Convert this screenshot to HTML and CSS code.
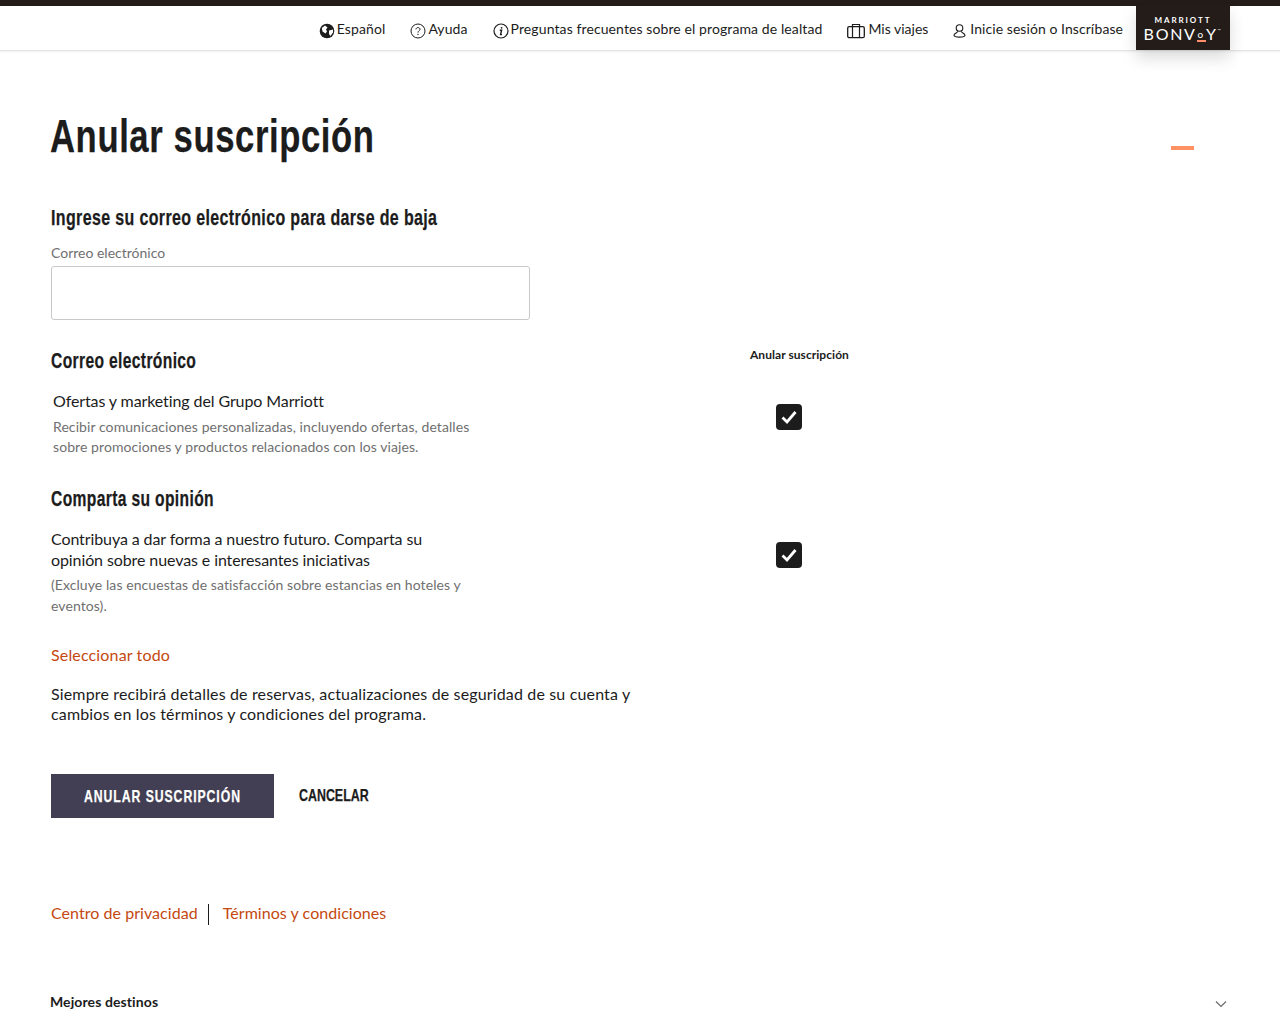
FILE: index.html
```html
<!DOCTYPE html>
<html lang="es">
<head>
<meta charset="utf-8">
<title>Anular suscripción</title>
<link rel="stylesheet" href="styles.css">
</head>
<body>
<header class="topbar">
  <nav class="nav">
    <a class="nav-item"><svg class="ico" width="16" height="16" viewBox="0 0 16 16"><circle cx="8" cy="8" r="7.300" fill="#1c1c1c"/><path d="M2.800 5 6 2.500 8.500 4.500 7 6.500 8 8.500 6.500 10.500 3.500 8.500ZM10 7.500 14 6.500 14 9.500 11.500 13 10 11Z" fill="#fff"/></svg>Español</a>
    <a class="nav-item"><svg class="ico" width="16" height="16" viewBox="0 0 16 16"><circle cx="8" cy="8" r="7" fill="none" stroke="#1c1c1c"/><path d="M6 6.300C6 4 10 4 10 6.300 10 7.800 8 7.800 8 9.600" fill="none" stroke="#1c1c1c"/><circle cx="8" cy="11.400" r=".7" fill="#1c1c1c"/></svg>Ayuda</a>
    <a class="nav-item"><svg class="ico" width="16" height="16" viewBox="0 0 16 16"><circle cx="8" cy="8" r="7" fill="none" stroke="#1c1c1c" stroke-width="1.200"/><path d="M6.800 7.200H8.600L7.600 11.600H9" fill="none" stroke="#1c1c1c" stroke-width="1.400"/><circle cx="8.600" cy="4.800" r=".9" fill="#1c1c1c"/></svg>Preguntas frecuentes sobre el programa de lealtad</a>
    <a class="nav-item nav-trips"><svg class="ico" width="18" height="16" viewBox="0 0 18 16"><rect x=".7" y="3.700" width="16.600" height="11" rx="1.500" fill="none" stroke="#1c1c1c" stroke-width="1.300"/><path d="M5.500 14.500V1.500H12.500V14.500" fill="none" stroke="#1c1c1c" stroke-width="1.200"/></svg>Mis viajes</a>
    <a class="nav-item nav-user"><svg class="ico" width="13" height="16" viewBox="0 0 13 16"><circle cx="6.500" cy="5" r="3.300" fill="none" stroke="#1c1c1c" stroke-width="1.100"/><path d="M4.800 8.300C4.800 10 1 10 1 12.300 1 14.700 12 14.700 12 12.300 12 10 8.200 10 8.200 8.300" fill="none" stroke="#1c1c1c" stroke-width="1.100"/></svg>Inicie sesión o Inscríbase</a>
    <div class="logo">
      <span class="logo-top">MARRIOTT</span>
      <span class="logo-main">BONV<span class="logo-o">o</span>Y<span class="logo-tm">™</span></span>
    </div>
  </nav>
</header>

<main class="main">
  <div class="title-row">
    <h1 class="title">Anular suscripción</h1>
    <span class="dash"></span>
  </div>

  <h2 class="h2 h2-email">Ingrese su correo electrónico para darse de baja</h2>
  <label class="field-label" for="email">Correo electrónico</label>
  <input class="field" id="email" type="text">

  <section class="pref pref-first">
    <div class="pref-head">
      <h2 class="h2 h2-tight">Correo electrónico</h2>
      <span class="col-label">Anular suscripción</span>
    </div>
    <div class="pref-row">
      <div class="pref-text indented">
        <p class="pref-title">Ofertas y marketing del Grupo Marriott</p>
        <p class="pref-desc">Recibir comunicaciones personalizadas, incluyendo ofertas, detalles sobre promociones y productos relacionados con los viajes.</p>
      </div>
      <span class="check"><svg width="26" height="26" viewBox="0 0 26 26"><path d="M6.500 13.500 11 18 19.500 8" fill="none" stroke="#fff" stroke-width="2.800"/></svg></span>
    </div>
  </section>

  <section class="pref pref-second">
    <h2 class="h2 h2-tight">Comparta su opinión</h2>
    <div class="pref-row">
      <div class="pref-text">
        <p class="pref-title">Contribuya a dar forma a nuestro futuro. Comparta su opinión sobre nuevas e interesantes iniciativas</p>
        <p class="pref-desc">(Excluye las encuestas de satisfacción sobre estancias en hoteles y eventos).</p>
      </div>
      <span class="check"><svg width="26" height="26" viewBox="0 0 26 26"><path d="M6.500 13.500 11 18 19.500 8" fill="none" stroke="#fff" stroke-width="2.800"/></svg></span>
    </div>
  </section>

  <a class="link select-all">Seleccionar todo</a>
  <p class="note">Siempre recibirá detalles de reservas, actualizaciones de seguridad de su cuenta y cambios en los términos y condiciones del programa.</p>

  <div class="actions">
    <button class="btn-primary" type="button"><span class="btn-label">ANULAR SUSCRIPCIÓN</span></button>
    <a class="btn-cancel">CANCELAR</a>
  </div>

  <div class="legal">
    <a class="link legal-a">Centro de privacidad</a>
    <a class="link legal-b">Términos y condiciones</a>
  </div>

  <div class="footer-row">
    <span class="footer-title">Mejores destinos</span>
    <svg class="chev" width="12" height="8" viewBox="0 0 12 8"><path d="M1 1.500 6 6.500 11 1.500" fill="none" stroke="#6b6b6b" stroke-width="1.200"/></svg>
  </div>
</main>
</body>
</html>
```
FILE: styles.css
```css
* { box-sizing: border-box; }
html, body { margin: 0; padding: 0; }
body {
  background: #fff;
  color: #1c1c1c;
  font-family: Lato, "Liberation Sans", sans-serif;
  height: 1024px;
  overflow: hidden;
}
p, h1, h2 { margin: 0; }

.topbar {
  height: 51px;
  border-top: 6px solid #231c19;
  border-bottom: 1px solid #e4e4e4;
  box-shadow: 0 1px 2px rgba(0,0,0,.06);
  background: #fff;
}
.nav {
  display: flex;
  justify-content: flex-end;
  padding-right: 50px;
  height: 44px;
}
.nav-item {
  display: flex;
  align-items: center;
  gap: 2px;
  margin-right: 25px;
  font-size: 14px;
  letter-spacing: .1px;
  color: #1c1c1c;
  white-space: nowrap;
}
.nav-trips { gap: 3px; letter-spacing: 0; }
.nav-user { gap: 4px; margin-right: 13px; letter-spacing: .06px; }
.ico { margin-top: 5px; flex: none; }
.logo {
  width: 94px;
  height: 44px;
  background: #231c19;
  color: #fff;
  display: flex;
  flex-direction: column;
  align-items: center;
  padding-top: 9px;
  box-shadow: 0 8px 16px rgba(0,0,0,.14);
}
.logo-top {
  font-size: 8px;
  line-height: 10px;
  letter-spacing: 1.900px;
  font-weight: 700;
}
.logo-main {
  height: 17px;
  margin-top: -3px;
  font-size: 16px;
  line-height: 17px;
  letter-spacing: 1.700px;
  white-space: nowrap;
}
.logo-o {
  display: inline-block;
  font-size: 10px;
  line-height: 9px;
  vertical-align: 2px;
  padding: 0 1px 1px;
  border-bottom: 2px solid #ff8d6b;
  margin-bottom: -3px;
}
.logo-tm { font-size: 4px; vertical-align: 8px; }

.main { padding: 0 50px 0 51px; }
.title-row {
  display: flex;
  justify-content: space-between;
  align-items: flex-start;
  padding-top: 57px;
  padding-right: 35px;
}
.title, .h2, .btn-label, .btn-cancel {
  font-family: "Liberation Sans", sans-serif;
  font-weight: 700;
  transform-origin: left center;
  white-space: nowrap;
  -webkit-text-stroke: .25px currentColor;
}
.title {
  font-size: 46px;
  line-height: 56px;
  margin-left: -1px;
  width: 323px;
  letter-spacing: .8px;
  transform: scaleX(.753);
}
.dash {
  width: 23px;
  height: 4px;
  background: #ff9162;
  margin-top: 38px;
  margin-right: 1px;
}
.h2 {
  font-size: 22px;
  line-height: 26px;
  letter-spacing: .5px;
  transform: scaleX(.727);
}
.h2-tight { transform: scaleX(.71); }
.h2-email { margin-top: 41px; }
.field-label {
  display: block;
  margin-top: 13px;
  font-size: 14px;
  line-height: 18px;
  color: #707070;
}
.field {
  display: block;
  width: 479px;
  height: 54px;
  margin-top: 4px;
  border: 1px solid #c9c9c9;
  border-radius: 3px;
  background: #fff;
}
.pref-first { margin-top: 28px; }
.pref-head {
  display: flex;
  align-items: flex-start;
}
.pref-head .h2 { width: 699px; flex: none; }
.col-label {
  font-size: 12px;
  line-height: 16px;
  letter-spacing: .05px;
  font-weight: 700;
  margin-top: -1px;
}
.pref-row {
  display: flex;
  align-items: flex-start;
  margin-top: 16px;
}
.pref-text { width: 725px; flex: none; }
.indented { padding-left: 2px; }
.pref-title {
  width: 420px;
  font-size: 16px;
  line-height: 21px;
  letter-spacing: -.1px;
}
.pref-desc {
  width: 420px;
  margin-top: 6px;
  font-size: 14px;
  line-height: 20px;
  letter-spacing: .08px;
  color: #707070;
}
.pref-second .pref-desc {
  margin-top: 4px;
  line-height: 21px;
}
.check {
  width: 26px;
  height: 26px;
  margin-top: 14px;
  background: #1c1c1c;
  border-radius: 4px;
  display: block;
}
.check svg { display: block; }
.pref-second { margin-top: 29px; }
.link { color: #c4480f; }
.select-all {
  display: block;
  margin-top: 29px;
  font-size: 16px;
  line-height: 20px;
  letter-spacing: .15px;
}
.note {
  width: 600px;
  margin-top: 19px;
  font-size: 16px;
  line-height: 20px;
  letter-spacing: .15px;
}
.actions {
  display: flex;
  align-items: center;
  margin-top: 50px;
}
.btn-primary {
  width: 223px;
  height: 44px;
  background: #423f54;
  border: 0;
  padding: 2px 0 0 33px;
  color: #fff;
  text-align: left;
  white-space: nowrap;
}
.btn-label {
  display: block;
  font-size: 17px;
  letter-spacing: 1.300px;
  transform: scaleX(.72);
}
.btn-cancel {
  margin-left: 25px;
  font-size: 17px;
  transform: scaleX(.73);
}
.legal {
  display: flex;
  align-items: flex-start;
  margin-top: 86px;
  font-size: 16px;
  line-height: 18px;
  letter-spacing: .05px;
}
.legal-a {
  padding: 0 10px 3px 0;
  border-right: 1px solid #1c1c1c;
}
.legal-b { margin-left: 14px; }
.footer-row {
  display: flex;
  justify-content: space-between;
  align-items: center;
  margin: 68px 3px 0 -1px;
}
.footer-title {
  font-size: 14px;
  line-height: 18px;
  letter-spacing: .1px;
  font-weight: 700;
}
.chev { margin-top: 3px; }
```
